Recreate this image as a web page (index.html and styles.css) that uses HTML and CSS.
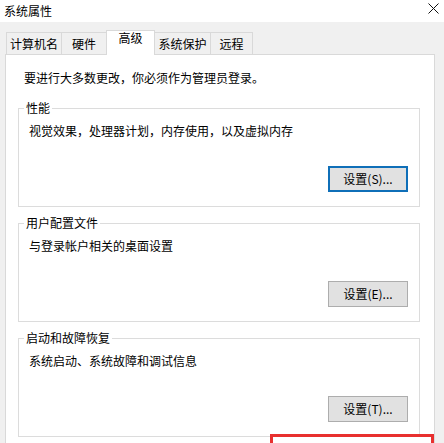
FILE: index.html
```html
<!DOCTYPE html>
<html lang="zh-CN">
<head>
<meta charset="utf-8">
<title>系统属性</title>
<link rel="stylesheet" href="styles.css">
</head>
<body>
<div class="titlebar">
  <span class="title">系统属性</span>
  <svg class="close" width="11" height="11" viewBox="0 0 11 11"><path d="M0.5 0.5 L10.5 10.5 M10.5 0.5 L0.5 10.5" stroke="#111" stroke-width="1" fill="none"/></svg>
</div>
<div class="tabs">
  <div class="tab tab-name">计算机名</div>
  <div class="tab tab-hw">硬件</div>
  <div class="tab tab-adv selected">高级</div>
  <div class="tab tab-prot">系统保护</div>
  <div class="tab tab-remote">远程</div>
</div>
<div class="panel">
  <p class="intro">要进行大多数更改，你必须作为管理员登录。</p>
  <fieldset class="group first">
    <legend>性能</legend>
    <p class="desc">视觉效果，处理器计划，内存使用，以及虚拟内存</p>
    <div class="actions"><button class="btn focused">设置(S)...</button></div>
  </fieldset>
  <fieldset class="group">
    <legend>用户配置文件</legend>
    <p class="desc">与登录帐户相关的桌面设置</p>
    <div class="actions"><button class="btn">设置(E)...</button></div>
  </fieldset>
  <fieldset class="group">
    <legend>启动和故障恢复</legend>
    <p class="desc">系统启动、系统故障和调试信息</p>
    <div class="actions"><button class="btn">设置(T)...</button></div>
  </fieldset>
</div>
<div class="highlight"></div>
</body>
</html>
```
FILE: styles.css
```css
* { box-sizing: border-box; }
html, body {
  margin: 0;
  padding: 0;
}
body {
  width: 444px;
  height: 443px;
  overflow: hidden;
  position: relative;
  background: #f0f0f0;
  font-family: "Noto Sans CJK SC", "Microsoft YaHei", sans-serif;
  font-size: 12px;
  color: #000;
}
.titlebar {
  height: 22px;
  background: #fff;
  display: flex;
  align-items: center;
  justify-content: space-between;
  padding: 0 5px 0 4px;
}
.title {
  line-height: 16px;
  margin-top: -1px;
}
.close {
  margin-top: -6px;
}
.tabs {
  display: flex;
  align-items: flex-start;
  height: 33px;
  padding: 8px 0 0 6px;
  margin-bottom: -1px;
}
.tab {
  height: 22px;
  margin-top: 2px;
  line-height: 21px;
  text-align: center;
  background: #f0f0f0;
  border: 1px solid #d9d9d9;
  border-bottom: none;
  white-space: nowrap;
}
.tab + .tab { margin-left: -1px; }
.tab-name { width: 56px; }
.tab-hw { width: 46px; }
.tab-adv { width: 49px; }
.tab-prot { width: 57px; }
.tab-remote { width: 43px; }
.tab.selected {
  position: relative;
  z-index: 1;
  height: 25px;
  margin-top: 0;
  line-height: 14px;
  background: #fff;
}
.panel {
  height: 400px;
  margin: 0 9px 0 5px;
  background: #fff;
  border: 1px solid #d9d9d9;
  padding: 15px 14px 0 12px;
}
.intro {
  margin: 0;
  padding-left: 6px;
  line-height: 16px;
}
.group {
  margin: 9px 0 0;
  padding: 0 11px 14px 10px;
  border: 1px solid #dcdcdc;
  min-width: 0;
}
.group.first { margin-top: 15px; }
.group legend {
  margin-left: -5px;
  padding: 0 2px;
  line-height: 14px;
  font-size: 12px;
}
.desc {
  margin: 8px 0 0;
  line-height: 16px;
}
.actions {
  display: flex;
  justify-content: flex-end;
  margin-top: 27px;
}
.btn {
  width: 80px;
  height: 26px;
  padding: 0;
  background: #e1e1e1;
  border: 1px solid #adadad;
  font-family: inherit;
  font-size: 12px;
  color: #000;
  line-height: 16px;
}
.btn.focused {
  border: 2px solid #0f6fb8;
}
.highlight {
  position: absolute;
  left: 270px;
  top: 434px;
  width: 164px;
  height: 24px;
  border: 3px solid #e8302f;
  background: #fff;
}
```
